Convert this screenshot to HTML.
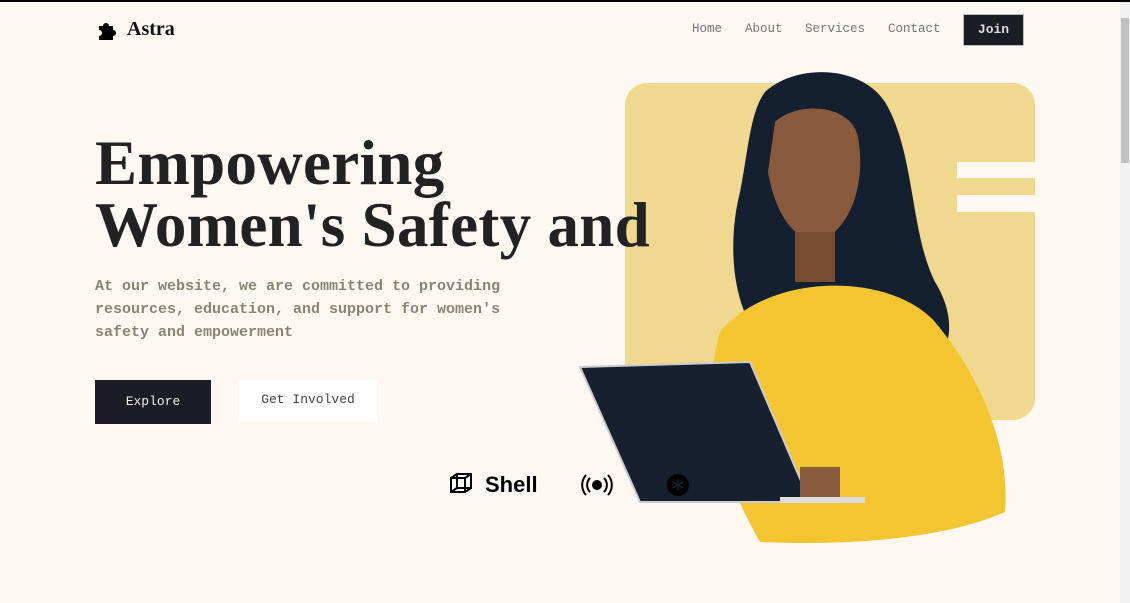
<!DOCTYPE html>
<html><head><meta charset="utf-8"><style>
*{margin:0;padding:0;box-sizing:border-box}
html,body{width:1130px;height:603px;overflow:hidden;background:#fdf8f1}
body{position:relative;font-family:"Liberation Mono",monospace;border-top:2px solid #000}
.logo{position:absolute;left:95px;top:16px;display:flex;align-items:center;gap:10px;font:bold 20px "Liberation Serif",serif;color:#111}
.nav{position:absolute;top:20px;font-size:12.5px;color:#777}
.join{position:absolute;left:963px;top:12px;width:61px;height:32px;background:#1c1c24;border:1px solid #bbb;color:#ddd;font-size:13px;font-weight:bold;text-align:center;line-height:30px}
h1{position:absolute;left:95px;top:130px;font:bold 63px/62px "Liberation Serif",serif;color:#222;white-space:nowrap;letter-spacing:.3px}
p{position:absolute;left:95px;top:273px;font-size:15px;line-height:23px;color:#8a8378;width:420px;font-weight:bold}
.b1{position:absolute;left:95px;top:378px;width:116px;height:44px;background:#1c1c24;color:#eee;font-size:13px;text-align:center;line-height:44px}
.b2{position:absolute;left:239px;top:378px;width:138px;height:42px;background:#fff;color:#444;font-size:13px;text-align:center;line-height:40px}
.sb{position:absolute;right:0;top:0;width:10px;height:603px;background:#f0f0f0}
.sb div{position:absolute;left:1px;top:16px;width:8px;height:145px;background:#c1c1c1}
</style></head><body>
<div class="logo"><svg width="22" height="20" viewBox="0 0 22 20"><path d="M4 6h4a3 3 0 1 1 6 0h4v4a3 3 0 1 1 0 6v4H4v-4a3 3 0 1 0 0-6z" fill="#000"/></svg>Astra</div>
<div class="nav" style="left:692px">Home</div>
<div class="nav" style="left:745px">About</div>
<div class="nav" style="left:805px">Services</div>
<div class="nav" style="left:888px">Contact</div>
<div class="join">Join</div>
<svg style="position:absolute;left:578px;top:65px" width="460" height="480" viewBox="578 65 460 480">
<rect x="625" y="81" width="410" height="337" rx="22" fill="#f0d88f"/>
<rect x="957" y="160" width="78" height="16" fill="#fdf8f1"/>
<rect x="957" y="193" width="78" height="17" fill="#fdf8f1"/>
<path d="M765 90 C795 62 860 62 885 100 C915 150 910 230 935 280 C960 320 950 360 920 370 L770 345 C735 320 725 250 740 190 C748 150 750 110 765 90 Z" fill="#142030"/>
<path d="M775 120 C795 100 850 100 858 135 C866 180 852 225 820 240 C792 238 775 210 768 170 Z" fill="#8a5a3c"/>
<path d="M795 230 h40 v50 h-40z" fill="#7a4d33"/>
<path d="M720 330 C770 270 890 270 935 320 C985 380 1010 450 1005 510 C960 530 880 545 760 540 C720 470 700 400 720 330Z" fill="#f2c531"/>
<path d="M580 365 L750 360 L810 500 L640 500 Z" fill="#16202e" stroke="#ccc" stroke-width="2"/>
<path d="M800 465 h40 v30 h-40z" fill="#8a5a3c"/>
<path d="M780 495 h85 v6 h-85z" fill="#ddd"/>
</svg>
<h1>Empowering<br>Women's Safety and</h1>
<p>At our website, we are committed to providing resources, education, and support for women's safety and empowerment</p>
<div class="b1">Explore</div>
<div class="b2">Get Involved</div>
<svg style="position:absolute;left:449px;top:470px" width="25" height="25" viewBox="0 0 25 25" fill="none" stroke="#000" stroke-width="2"><path d="M2 6h14v14H2z M8 2h14v14H8z M2 6l6-4 M16 6l6-4 M16 20l6-4 M2 20l6-4"/></svg>
<div style="position:absolute;left:485px;top:470px;font:bold 22px 'Liberation Sans',sans-serif;color:#000">Shell</div>
<svg style="position:absolute;left:581px;top:471px" width="32" height="24" viewBox="0 0 32 24" fill="none" stroke="#000" stroke-width="2"><circle cx="16" cy="12" r="4" fill="#000"/><path d="M9 5a10 10 0 0 0 0 14M23 5a10 10 0 0 1 0 14M5 2a15 15 0 0 0 0 20M27 2a15 15 0 0 1 0 20"/></svg>
<svg style="position:absolute;left:667px;top:472px" width="22" height="22" viewBox="0 0 22 22"><circle cx="11" cy="11" r="11" fill="#000"/><path d="M11 5v12M5.8 8l10.4 6M5.8 14l10.4-6" stroke="#16202e" stroke-width="1.5"/></svg>
<div class="sb"><div></div></div>
</body></html>
